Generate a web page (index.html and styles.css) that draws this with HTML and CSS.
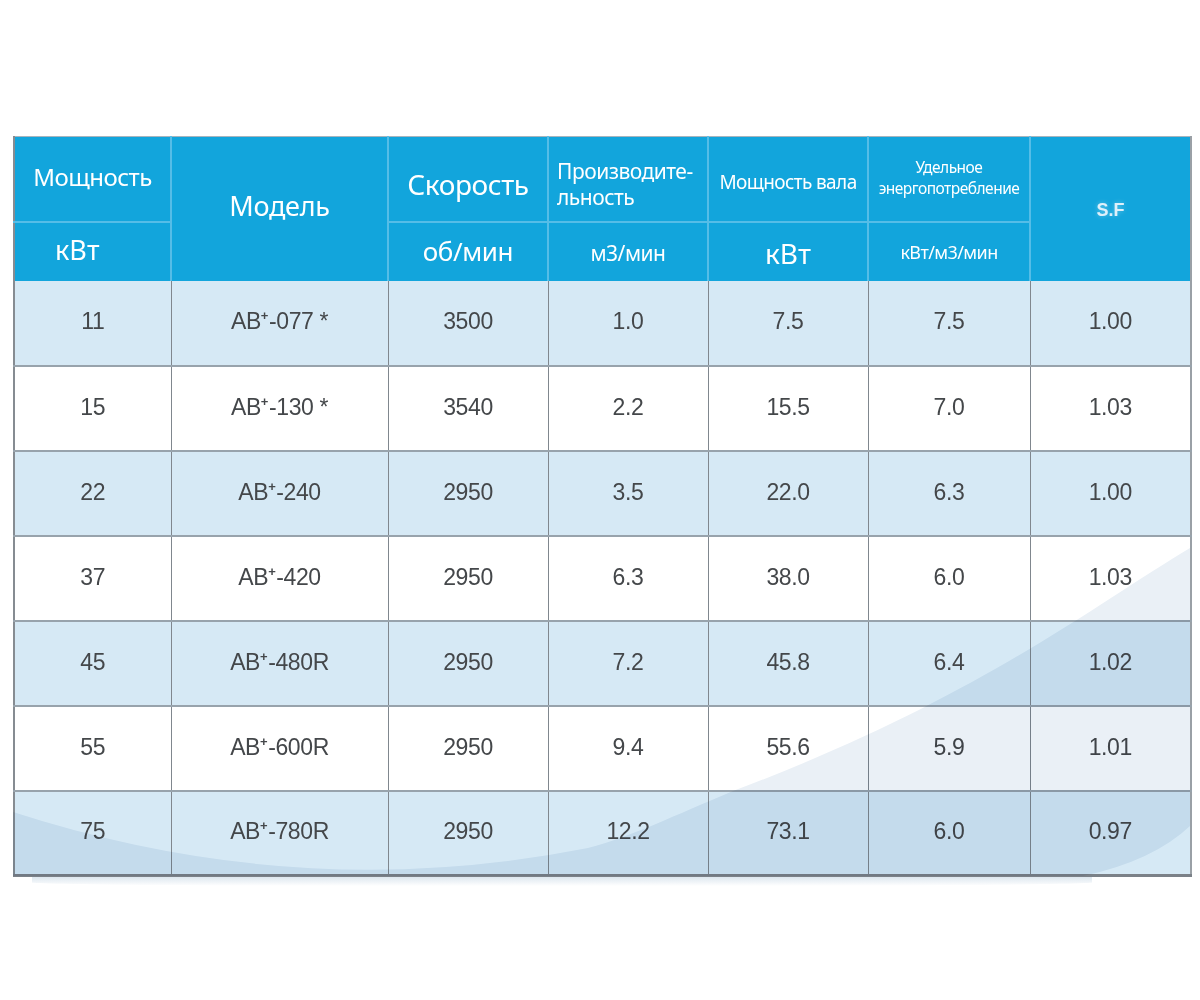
FILE: index.html
```html
<!DOCTYPE html>
<html lang="ru">
<head>
<meta charset="utf-8">
<title>Таблица</title>
<link rel="stylesheet" href="styles.css">
</head>
<body>
<div class="wrap">
  <table class="spec">
    <colgroup>
      <col class="c1"><col class="c2"><col class="c3"><col class="c4"><col class="c5"><col class="c6"><col class="c7">
    </colgroup>
    <thead>
      <tr class="h1">
        <th class="t-pow">Мощность</th>
        <th rowspan="2" class="t-model">Модель</th>
        <th class="t-speed">Скорость</th>
        <th class="t-prod"><span class="ln">Производите-</span><span class="ln">льность</span></th>
        <th class="t-shaft">Мощность вала</th>
        <th class="t-spec"><span class="ln">Удельное</span><span class="ln">энергопотребление</span></th>
        <th rowspan="2" class="t-sf">S.F</th>
      </tr>
      <tr class="h2">
        <th class="u-kw">кВт</th>
        <th class="u-rpm">об/мин</th>
        <th class="u-flow">м3/мин</th>
        <th class="u-kw2">кВт</th>
        <th class="u-spec">кВт/м3/мин</th>
      </tr>
    </thead>
    <tbody>
      <tr class="blue"><td>11</td><td>AB<sup>+</sup>-077 *</td><td>3500</td><td>1.0</td><td>7.5</td><td>7.5</td><td>1.00</td></tr>
      <tr><td>15</td><td>AB<sup>+</sup>-130 *</td><td>3540</td><td>2.2</td><td>15.5</td><td>7.0</td><td>1.03</td></tr>
      <tr class="blue"><td>22</td><td>AB<sup>+</sup>-240</td><td>2950</td><td>3.5</td><td>22.0</td><td>6.3</td><td>1.00</td></tr>
      <tr><td>37</td><td>AB<sup>+</sup>-420</td><td>2950</td><td>6.3</td><td>38.0</td><td>6.0</td><td>1.03</td></tr>
      <tr class="blue"><td>45</td><td>AB<sup>+</sup>-480R</td><td>2950</td><td>7.2</td><td>45.8</td><td>6.4</td><td>1.02</td></tr>
      <tr><td>55</td><td>AB<sup>+</sup>-600R</td><td>2950</td><td>9.4</td><td>55.6</td><td>5.9</td><td>1.01</td></tr>
      <tr class="blue"><td>75</td><td>AB<sup>+</sup>-780R</td><td>2950</td><td>12.2</td><td>73.1</td><td>6.0</td><td>0.97</td></tr>
    </tbody>
  </table>
  <svg class="swoosh" viewBox="0 0 1177 740" preserveAspectRatio="none" aria-hidden="true">
    <path d="M1177,412 C1080,470 960,565 720,655 C660,680 620,700 575,712 Q287,769 0,676 L0,740 L1070,740 Q1140,725 1177,690 Z" fill="#eaf0f6"/>
  </svg>
</div>
<div class="shadow"></div>
</body>
</html>
```
FILE: styles.css
```css
html, body {
  margin: 0;
  padding: 0;
  background: #ffffff;
}

body {
  font-family: "Liberation Sans", Arial, sans-serif;
}

.wrap {
  position: relative;
  width: 1177px;
  margin: 136px 0 0 13px;
}

.spec {
  width: 1177px;
  table-layout: fixed;
  border-collapse: collapse;
  border-left: 2px solid #868c92;
  border-right: 2px solid #9aa0a6;
  border-top: 1px solid #a7b4bd;
  border-bottom: 3px solid #7b8188;
}

.c1 { width: 157px; }
.c2 { width: 217px; }
.c3 { width: 160px; }
.c4 { width: 160px; }
.c5 { width: 160px; }
.c6 { width: 162px; }
.c7 { width: 161px; }

.spec th {
  background: #12a5dc;
  color: #ffffff;
  font-family: "Noto Sans", "Open Sans", sans-serif;
  font-weight: 400;
  border: 2px solid #55bde7;
  padding: 0;
  text-align: center;
  vertical-align: middle;
  line-height: 1.1;
  white-space: nowrap;
}

.spec th .ln { display: block; }

.spec thead tr:first-child th { border-top: none; }
.spec thead th:first-child { border-left: none; }
.spec thead th.t-sf { border-right: none; }
.spec thead tr.h2 th { border-bottom: none; }
.spec thead th.t-model, .spec thead th.t-sf { border-bottom: none; }

.h1 { height: 85px; }
.h2 { height: 59px; }

.t-pow { font-size: 24px; letter-spacing: -0.5px; padding-bottom: 3px !important; }
.t-model { font-size: 27px; letter-spacing: -0.3px; padding-bottom: 6px !important; }
.t-speed { font-size: 28px; letter-spacing: -0.4px; padding-top: 12px !important; }
.t-prod {
  font-size: 21px;
  letter-spacing: -0.5px;
  text-align: left !important;
  padding: 10px 0 0 8px !important;
  line-height: 26px !important;
}
.t-shaft { font-size: 19px; letter-spacing: -0.6px; padding-top: 8px !important; }
.t-spec { font-size: 15.5px; letter-spacing: -0.5px; line-height: 21px !important; padding-bottom: 2px !important; }
.t-sf {
  font-family: "Liberation Sans", Arial, sans-serif !important;
  font-weight: 700 !important;
  font-size: 18px;
  color: #dff0fa !important;
  text-shadow: 0 0 5px rgba(255, 255, 255, 0.35);
  padding-top: 4px !important;
}

.u-kw { font-size: 27px; text-align: left !important; padding-left: 40px !important; padding-bottom: 4px !important; }
.u-rpm { font-size: 26px; letter-spacing: -0.4px; }
.u-flow { font-size: 21px; letter-spacing: -0.5px; padding-top: 4px !important; }
.u-kw2 { font-size: 28px; padding-top: 4px !important; }
.u-spec { font-size: 18px; letter-spacing: -0.6px; padding-top: 2px !important; }

.spec tbody tr { height: 85px; }
.spec tbody tr.blue { background: #d6e9f5; }
.spec tbody tr:not(.blue) { background: #ffffff; }

.spec td {
  border-left: 1px solid #80878e;
  border-right: 1px solid #80878e;
  border-top: 2px solid #98a3ac;
  border-bottom: 2px solid #98a3ac;
  color: #44474a;
  font-size: 23px;
  text-align: center;
  vertical-align: middle;
  padding: 0 0 2px 0;
  letter-spacing: -0.4px;
}

.spec tbody tr:first-child td { border-top: none; }

.spec sup {
  font-size: 13px;
  vertical-align: 0;
  position: relative;
  top: -9px;
  margin: 0 1px 0 0;
  font-weight: 700;
}

.swoosh {
  position: absolute;
  left: 0;
  top: 0;
  width: 1177px;
  height: 740px;
  pointer-events: none;
  mix-blend-mode: multiply;
}

.shadow {
  height: 9px;
  width: 1060px;
  margin-left: 32px;
  background: linear-gradient(to bottom, #dde7ef, rgba(255, 255, 255, 0));
  border-radius: 0 0 40% 40%;
}
```
